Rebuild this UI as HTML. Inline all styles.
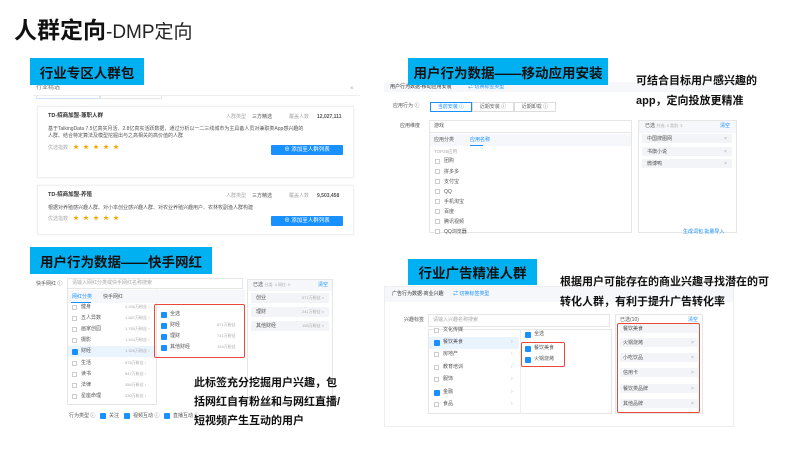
<!DOCTYPE html>
<html><head><meta charset="utf-8"><style>
*{margin:0;padding:0;box-sizing:border-box}
body{width:792px;height:471px;background:#fff;position:relative;overflow:hidden;font-family:"Liberation Sans","Noto Sans CJK SC",sans-serif;color:#333}
.a{position:absolute}
.lab{position:absolute;background:#00b0f0;color:#111;font-size:13.5px;font-weight:bold;display:flex;align-items:center;justify-content:center;white-space:nowrap}
.t{position:absolute;font-size:5px;color:#555;white-space:nowrap;line-height:1}
.g{color:#aaa}
.b{color:#1890ff}
.box{position:absolute;border:1px solid #e6e6e6;background:#fff}
.cb{position:absolute;width:5px;height:5px;border:1px solid #ccc;background:#fff}
.ck{position:absolute;width:6px;height:6px;background:#1890ff;border-radius:1px}
.red{position:absolute;border:1.3px solid #e8493b;border-radius:2px}
.tag{position:absolute;background:#f2f4f7;height:9px}
.note{position:absolute;font-size:11px;font-weight:bold;color:#111;white-space:nowrap;line-height:1}
.star{color:#f7a800;font-size:6px;letter-spacing:4px}
</style></head><body>

<div class="a" style="left:14px;top:11px;font-size:23px;font-weight:bold;color:#111;white-space:nowrap">人群定向<span style="font-weight:normal;font-size:19px;color:#222">-DMP定向</span></div>

<!-- Panel 1 -->
<div class="t" style="left:36px;top:85px;font-size:6px;color:#777">行业精选</div>
<div class="t g" style="left:350px;top:86px;font-size:6px">×</div>
<div class="a" style="left:33px;top:95px;width:327px;height:1px;background:#eee"></div>
<div class="a" style="left:36px;top:96px;width:64px;height:3px;border:1px solid #cfe3ff;border-top:none"></div>
<div class="a" style="left:100px;top:96px;width:62px;height:3px;border:1px solid #e5e5e5;border-top:none"></div>
<div class="box" style="left:37px;top:106px;width:317px;height:72px;border-color:#f0f0f0;box-shadow:0 0 2px #eee"></div>
<div class="t" style="left:48px;top:114px;font-size:5.5px;color:#333;font-weight:bold">TD-招商加盟-兼职人群</div>
<div class="t g" style="left:226px;top:115px">人群类型</div><div class="t" style="left:252px;top:115px">三方精选</div>
<div class="t g" style="left:289px;top:115px">覆盖人数</div><div class="t" style="left:317px;top:115px;font-weight:bold">12,027,111</div>
<div class="t" style="left:48px;top:127px">基于TalkingData 7.5亿真实月活、2.8亿真实活跃数据，通过分析以一二三线城市为主具备人员对兼职类App感兴趣的</div>
<div class="t" style="left:48px;top:134px">人群、结合特定算法及模型挖掘出与之高相关的高价值的人群</div>
<div class="t g" style="left:48px;top:146px">优选指数</div><div class="t star" style="left:73px;top:145px">★★★★★</div>
<div class="a" style="left:271px;top:145px;width:72px;height:10px;background:#1890ff;border-radius:1px;color:#fff;font-size:5.5px;text-align:center;line-height:10px">⊕ 添加至人群列表</div>
<div class="box" style="left:37px;top:185px;width:317px;height:50px;border-color:#f0f0f0;box-shadow:0 0 2px #eee"></div>
<div class="t" style="left:48px;top:193px;font-size:5.5px;color:#333;font-weight:bold">TD-招商加盟-养殖</div>
<div class="t g" style="left:226px;top:194px">人群类型</div><div class="t" style="left:252px;top:194px">三方精选</div>
<div class="t g" style="left:289px;top:194px">覆盖人数</div><div class="t" style="left:317px;top:194px;font-weight:bold">9,503,458</div>
<div class="t" style="left:48px;top:206px">根据对养殖感兴趣人群、对小本创业感兴趣人群、对农业养殖兴趣用户、农林牧副渔人群构建</div>
<div class="t g" style="left:48px;top:217px">优选指数</div><div class="t star" style="left:73px;top:216px">★★★★★</div>
<div class="a" style="left:271px;top:216px;width:72px;height:10px;background:#1890ff;border-radius:1px;color:#fff;font-size:5.5px;text-align:center;line-height:10px">⊕ 添加至人群列表</div>
<div class="lab" style="left:30px;top:58px;width:114px;height:27px">行业专区人群包</div>

<!-- Panel 2 -->
<div class="a" style="left:384px;top:82px;width:352px;height:10px;background:#f5f7fa"></div>
<div class="t" style="left:390px;top:85px;color:#333">用户行为数据-移动应用安装</div>
<div class="t b" style="left:468px;top:85px">⇄ 切换标签类型</div>
<div class="t" style="left:393px;top:104px">应用行为 ⓘ</div>
<div class="a" style="left:430px;top:102px;width:42px;height:10px;border:1px solid #1890ff;font-size:5px;color:#1890ff;text-align:center;line-height:8px">当前安装 ⓘ</div>
<div class="a" style="left:472px;top:102px;width:42px;height:10px;border:1px solid #ddd;font-size:5px;color:#666;text-align:center;line-height:8px">近期安装 ⓘ</div>
<div class="a" style="left:514px;top:102px;width:42px;height:10px;border:1px solid #ddd;font-size:5px;color:#666;text-align:center;line-height:8px">近期卸载 ⓘ</div>
<div class="t" style="left:400px;top:124px">应用维度</div>
<div class="box" style="left:429px;top:120px;width:203px;height:13px"></div>
<div class="t" style="left:434px;top:124px">游戏</div>
<div class="box" style="left:429px;top:133px;width:203px;height:100px;border-top:none"></div>
<div class="a" style="left:430px;top:134px;width:201px;height:12px;background:#f5f7fa"></div>
<div class="t" style="left:434px;top:138px">应用分类</div>
<div class="t b" style="left:470px;top:138px">应用名称</div>
<div class="a" style="left:470px;top:145px;width:13px;height:1px;background:#1890ff"></div>
<div class="t g" style="left:434px;top:150px;font-size:4.5px">TOP20应用</div>
<div class="cb" style="left:435px;top:159px"></div><div class="t" style="left:444px;top:159px">团购</div>
<div class="cb" style="left:435px;top:169px"></div><div class="t" style="left:444px;top:170px">拼多多</div>
<div class="cb" style="left:435px;top:179px"></div><div class="t" style="left:444px;top:180px">支付宝</div>
<div class="cb" style="left:435px;top:189px"></div><div class="t" style="left:444px;top:190px">QQ</div>
<div class="cb" style="left:435px;top:199px"></div><div class="t" style="left:444px;top:200px">手机淘宝</div>
<div class="cb" style="left:435px;top:209px"></div><div class="t" style="left:444px;top:210px">百度</div>
<div class="cb" style="left:435px;top:219px"></div><div class="t" style="left:444px;top:220px">腾讯视频</div>
<div class="cb" style="left:435px;top:229px"></div><div class="t" style="left:444px;top:230px">QQ浏览器</div>
<div class="box" style="left:638px;top:120px;width:99px;height:113px"></div>
<div class="a" style="left:639px;top:121px;width:97px;height:12px;background:#f5f7fa"></div>
<div class="t" style="left:645px;top:124px">已选 <span class="g" style="font-size:4px">共选: 3 类别: 3</span></div>
<div class="t b" style="left:720px;top:124px">清空</div>
<div class="tag" style="left:642px;top:134px;width:90px"></div><div class="t" style="left:647px;top:137px">中国搜图网</div><div class="t g" style="left:724px;top:137px">×</div>
<div class="tag" style="left:642px;top:147px;width:90px"></div><div class="t" style="left:647px;top:150px">书旗小说</div><div class="t g" style="left:724px;top:150px">×</div>
<div class="tag" style="left:642px;top:159px;width:90px"></div><div class="t" style="left:647px;top:162px">微博鸭</div><div class="t g" style="left:724px;top:162px">×</div>
<div class="t b" style="left:683px;top:230px">生成词包 批量导入</div>
<div class="lab" style="left:408px;top:58px;width:200px;height:27px">用户行为数据——移动应用安装</div>
<div class="note" style="left:636px;top:76px">可结合目标用户感兴趣的</div>
<div class="note" style="left:636px;top:96px">app，定向投放更精准</div>

<!-- Panel 3 -->
<div class="t" style="left:36px;top:282px">快手网红 ⓘ</div>
<div class="box" style="left:67px;top:278px;width:176px;height:11px"></div>
<div class="t g" style="left:72px;top:281px">请输入网红分类或快手网红名称搜索</div>
<div class="box" style="left:67px;top:289px;width:90px;height:116px;border-top:none"></div>
<div class="a" style="left:68px;top:290px;width:177px;height:13px;background:#f5f7fa"></div>
<div class="t b" style="left:72px;top:295px">网红分类</div><div class="a" style="left:71px;top:302px;width:20px;height:1px;background:#1890ff"></div>
<div class="t" style="left:103px;top:295px">快手网红</div>
<div class="a" style="left:68px;top:346px;width:88px;height:11px;background:#eaf4ff"></div>
<div class="cb" style="left:72px;top:305px"></div><div class="t" style="left:81px;top:305px">健身</div><div class="t g" style="left:125px;top:305px;font-size:4px">2,296万粉丝 ›</div>
<div class="cb" style="left:72px;top:316px"></div><div class="t" style="left:81px;top:316px">五人异数</div><div class="t g" style="left:125px;top:316px;font-size:4px">1,687万粉丝 ›</div>
<div class="cb" style="left:72px;top:327px"></div><div class="t" style="left:81px;top:327px">画家创园</div><div class="t g" style="left:125px;top:327px;font-size:4px">1,785万粉丝 ›</div>
<div class="cb" style="left:72px;top:338px"></div><div class="t" style="left:81px;top:338px">摄影</div><div class="t g" style="left:125px;top:338px;font-size:4px">1,444万粉丝 ›</div>
<div class="ck" style="left:72px;top:349px"></div><div class="t" style="left:81px;top:349px">财经</div><div class="t g" style="left:125px;top:349px;font-size:4px">1,326万粉丝 ›</div>
<div class="cb" style="left:72px;top:361px"></div><div class="t" style="left:81px;top:361px">生活</div><div class="t g" style="left:125px;top:361px;font-size:4px">876万粉丝 ›</div>
<div class="cb" style="left:72px;top:372px"></div><div class="t" style="left:81px;top:372px">读书</div><div class="t g" style="left:125px;top:372px;font-size:4px">847万粉丝 ›</div>
<div class="cb" style="left:72px;top:383px"></div><div class="t" style="left:81px;top:383px">法律</div><div class="t g" style="left:125px;top:383px;font-size:4px">356万粉丝 ›</div>
<div class="cb" style="left:72px;top:394px"></div><div class="t" style="left:81px;top:394px">星座命理</div><div class="t g" style="left:125px;top:394px;font-size:4px">330万粉丝 ›</div>
<div class="red" style="left:154px;top:304px;width:91px;height:54px"></div>
<div class="ck" style="left:161px;top:312px"></div><div class="t" style="left:170px;top:312px">全选</div>
<div class="ck" style="left:161px;top:323px"></div><div class="t" style="left:170px;top:323px">财经</div><div class="t g" style="left:217px;top:323px;font-size:4px">871万粉丝</div>
<div class="ck" style="left:161px;top:334px"></div><div class="t" style="left:170px;top:334px">理财</div><div class="t g" style="left:217px;top:334px;font-size:4px">741万粉丝</div>
<div class="ck" style="left:161px;top:345px"></div><div class="t" style="left:170px;top:345px">其他财经</div><div class="t g" style="left:217px;top:345px;font-size:4px">154万粉丝</div>
<div class="box" style="left:247px;top:279px;width:86px;height:126px"></div>
<div class="a" style="left:248px;top:280px;width:84px;height:11px;background:#f5f7fa"></div>
<div class="t" style="left:253px;top:283px">已选 <span class="g" style="font-size:4px">分类: 3 网红: 0</span></div><div class="t b" style="left:318px;top:283px">清空</div>
<div class="tag" style="left:251px;top:293px;width:78px;height:10px"></div><div class="t" style="left:256px;top:296px">创业</div><div class="t g" style="left:302px;top:296px;font-size:4px">071万粉丝 ×</div>
<div class="tag" style="left:251px;top:307px;width:78px;height:10px"></div><div class="t" style="left:256px;top:310px">理财</div><div class="t g" style="left:302px;top:310px;font-size:4px">241万粉丝 ×</div>
<div class="tag" style="left:251px;top:321px;width:78px;height:10px"></div><div class="t" style="left:256px;top:324px">其他财经</div><div class="t g" style="left:302px;top:324px;font-size:4px">155万粉丝 ×</div>
<div class="t" style="left:69px;top:414px">行为类型 ⓘ</div>
<div class="ck" style="left:100px;top:413px"></div><div class="t" style="left:109px;top:414px">关注</div>
<div class="ck" style="left:124px;top:413px"></div><div class="t" style="left:133px;top:414px">视频互动 ⓘ</div>
<div class="ck" style="left:164px;top:413px"></div><div class="t" style="left:173px;top:414px">直播互动 ⓘ</div>
<div class="lab" style="left:30px;top:247px;width:182px;height:27px">用户行为数据——快手网红</div>
<div class="note" style="left:194px;top:378px">此标签充分挖掘用户兴趣，包</div>
<div class="note" style="left:194px;top:397px">括网红自有粉丝和与网红直播/</div>
<div class="note" style="left:194px;top:416px">短视频产生互动的用户</div>

<!-- Panel 4 -->
<div class="box" style="left:384px;top:286px;width:350px;height:141px;border-color:#eee"></div>
<div class="a" style="left:385px;top:287px;width:348px;height:15px;background:#f5f7fa"></div>
<div class="t" style="left:392px;top:292px;color:#333">广告行为数据-商业兴趣</div>
<div class="t b" style="left:453px;top:292px">⇄ 切换标签类型</div>
<div class="t" style="left:404px;top:318px">兴趣标签</div>
<div class="box" style="left:428px;top:314px;width:182px;height:13px"></div>
<div class="t g" style="left:433px;top:318px">请输入兴趣名称搜索</div>
<div class="box" style="left:428px;top:329px;width:184px;height:85px"></div>
<div class="a" style="left:520px;top:329px;width:1px;height:85px;background:#eee"></div>
<div class="a" style="left:429px;top:337px;width:90px;height:12px;background:#eaf4ff"></div>
<div class="cb" style="left:434px;top:328px"></div><div class="t" style="left:443px;top:328px">文化传媒</div>
<div class="ck" style="left:434px;top:340px"></div><div class="t" style="left:443px;top:340px">餐饮美食</div><div class="t g" style="left:511px;top:340px">›</div>
<div class="cb" style="left:434px;top:352px"></div><div class="t" style="left:443px;top:352px">房地产</div><div class="t g" style="left:511px;top:352px">›</div>
<div class="cb" style="left:434px;top:365px"></div><div class="t" style="left:443px;top:365px">教育培训</div><div class="t g" style="left:511px;top:365px">›</div>
<div class="cb" style="left:434px;top:377px"></div><div class="t" style="left:443px;top:377px">服饰</div><div class="t g" style="left:511px;top:377px">›</div>
<div class="ck" style="left:434px;top:390px"></div><div class="t" style="left:443px;top:390px">金融</div><div class="t g" style="left:511px;top:390px">›</div>
<div class="cb" style="left:434px;top:402px"></div><div class="t" style="left:443px;top:402px">食品</div><div class="t g" style="left:511px;top:402px">›</div>
<div class="ck" style="left:525px;top:332px"></div><div class="t" style="left:534px;top:332px">全选</div>
<div class="red" style="left:521px;top:342px;width:44px;height:25px"></div>
<div class="ck" style="left:525px;top:346px"></div><div class="t" style="left:534px;top:346px">餐饮美食</div>
<div class="ck" style="left:525px;top:357px"></div><div class="t" style="left:534px;top:357px">火锅烧烤</div>
<div class="box" style="left:615px;top:314px;width:88px;height:100px"></div>
<div class="t" style="left:620px;top:318px">已选(10)</div><div class="t b" style="left:688px;top:318px">清空</div>
<div class="tag" style="left:620px;top:324px;width:78px"></div><div class="t" style="left:623px;top:327px">餐饮美食</div>
<div class="tag" style="left:620px;top:338px;width:78px"></div><div class="t" style="left:623px;top:341px">火锅烧烤</div><div class="t g" style="left:691px;top:341px">×</div>
<div class="tag" style="left:620px;top:353px;width:78px"></div><div class="t" style="left:623px;top:356px">小吃饮品</div><div class="t g" style="left:691px;top:356px">×</div>
<div class="tag" style="left:620px;top:368px;width:78px"></div><div class="t" style="left:623px;top:371px">信用卡</div><div class="t g" style="left:691px;top:371px">×</div>
<div class="tag" style="left:620px;top:384px;width:78px"></div><div class="t" style="left:623px;top:387px">餐饮类品牌</div><div class="t g" style="left:691px;top:387px">×</div>
<div class="tag" style="left:620px;top:399px;width:78px"></div><div class="t" style="left:623px;top:402px">其他品牌</div><div class="t g" style="left:691px;top:402px">×</div>
<div class="red" style="left:617px;top:323px;width:83px;height:90px"></div>
<div class="lab" style="left:408px;top:259px;width:129px;height:26px">行业广告精准人群</div>
<div class="note" style="left:560px;top:277px">根据用户可能存在的商业兴趣寻找潜在的可</div>
<div class="note" style="left:560px;top:297px">转化人群，有利于提升广告转化率</div>
<div class="a" style="left:690px;top:426px;width:44px;height:1px;background:#eee"></div>
</body></html>
